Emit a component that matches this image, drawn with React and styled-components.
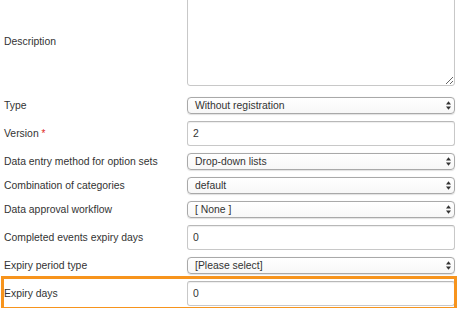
import React from "react";
import styled, { createGlobalStyle, css } from "styled-components";

const GlobalStyle = createGlobalStyle`
  body {
    margin: 0;
    background: #fff;
    font-family: "Liberation Sans", Arial, sans-serif;
    overflow: hidden;
  }
`;

const rows = [
  { label: "Type", kind: "select", value: "Without registration" },
  { label: "Version", kind: "input", value: "2", required: true },
  { label: "Data entry method for option sets", kind: "select", value: "Drop-down lists" },
  { label: "Combination of categories", kind: "select", value: "default" },
  { label: "Data approval workflow", kind: "select", value: "[ None ]" },
  { label: "Completed events expiry days", kind: "input", value: "0" },
  { label: "Expiry period type", kind: "select", value: "[Please select]" },
  { label: "Expiry days", kind: "input", value: "0", highlight: true },
];

function SelectArrows() {
  return (
    <svg width="5" height="9" viewBox="0 0 5 9">
      <polygon points="0,3.6 2.5,0.3 5,3.6" fill="#333" />
      <polygon points="0,5.4 2.5,8.7 5,5.4" fill="#333" />
    </svg>
  );
}

export default function App() {
  return (
    <>
      <GlobalStyle />
      <Form>
        <Row>
          <Label>Description</Label>
          <TextArea defaultValue="" />
        </Row>
        {rows.map((r) => (
          <Row key={r.label} $highlight={r.highlight}>
            <Label>
              {r.label}
              {r.required && <Required> *</Required>}
            </Label>
            {r.kind === "select" ? (
              <Select>
                <span>{r.value}</span>
                <SelectArrows />
              </Select>
            ) : (
              <Input defaultValue={r.value} />
            )}
          </Row>
        ))}
      </Form>
    </>
  );
}

const Form = styled.div`
  width: 452px;
  margin: -11px 0 0 3px;
`;

const Row = styled.div`
  display: grid;
  grid-template-columns: 184px 268px;
  align-items: center;
  padding: 3px 0 4px;

  ${(p) =>
    p.$highlight &&
    css`
      padding-bottom: 2px;
      outline: 3px solid #f7941d;
      outline-offset: -1px;
    `}
`;

const Label = styled.div`
  padding-left: 1px;
  font-size: 10.4px;
  color: #333;
  white-space: nowrap;
`;

const Required = styled.span`
  color: #e0261b;
  font-size: 10px;
`;

const TextArea = styled.textarea`
  display: block;
  box-sizing: border-box;
  width: 268px;
  height: 94px;
  margin: 0 0 4px;
  border: 1px solid #c8c8c8;
  border-radius: 3px;
  box-shadow: inset 0 1px 1px rgba(0, 0, 0, 0.06);
  font-family: "Liberation Sans", Arial, sans-serif;
  font-size: 10.4px;
  resize: both;
  outline: none;
`;

const Input = styled.input`
  display: block;
  box-sizing: border-box;
  width: 268px;
  height: 25px;
  margin: 0;
  padding: 0 5px;
  border: 1px solid #c8c8c8;
  border-top-color: #b8b8b8;
  border-radius: 3px;
  box-shadow: inset 0 1px 1px rgba(0, 0, 0, 0.07);
  font-family: "Liberation Sans", Arial, sans-serif;
  font-size: 10.4px;
  color: #333;
  background: #fff;
  outline: none;
`;

const Select = styled.div`
  box-sizing: border-box;
  display: flex;
  align-items: center;
  justify-content: space-between;
  width: 268px;
  height: 17px;
  padding: 0 3px 0 7px;
  border: 1px solid #a9a9a9;
  border-radius: 4px;
  background: linear-gradient(#ffffff, #f7f7f7);
  box-shadow: 0 0.5px 1px rgba(0, 0, 0, 0.12);
  font-size: 10.4px;
  color: #333;
  white-space: nowrap;
`;
